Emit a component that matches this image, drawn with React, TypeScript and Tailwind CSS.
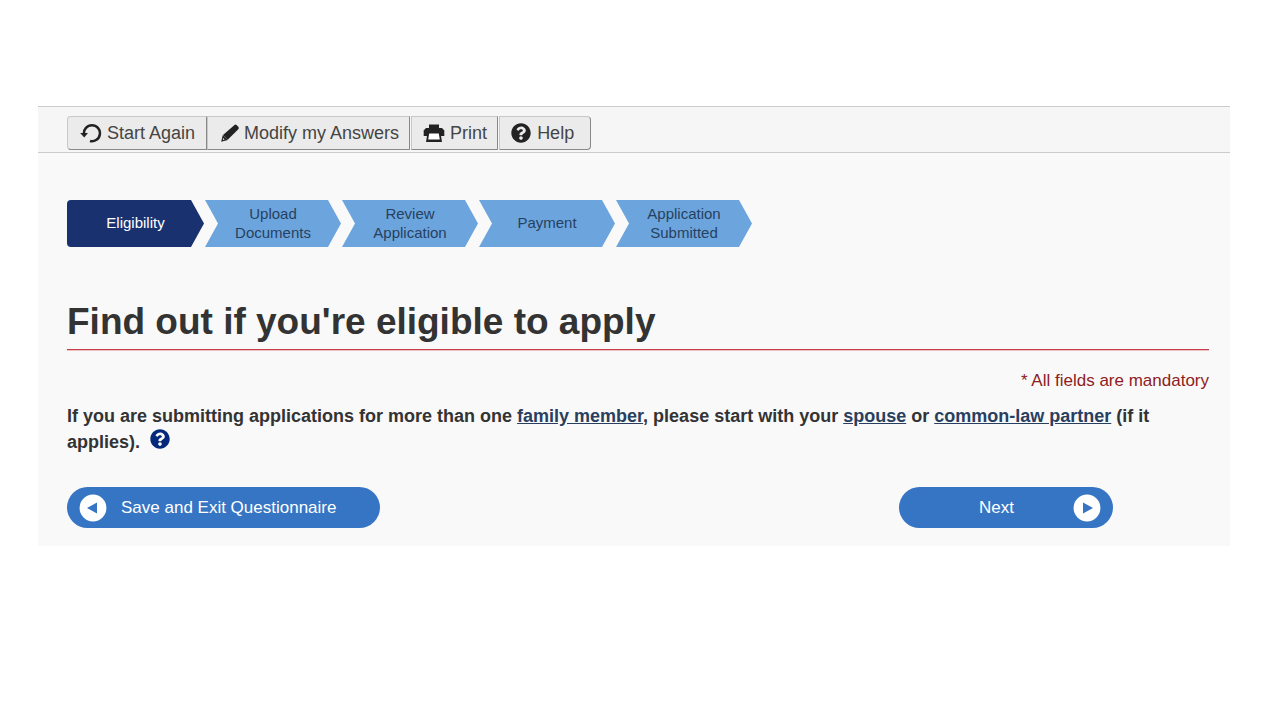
import type { ReactNode } from "react";
import clsx from "clsx";
import { FaQuestionCircle } from "react-icons/fa";

const steps = ["Eligibility", "Upload Documents", "Review Application", "Payment", "Application Submitted"];

function RestartIcon() {
  return (
    <svg className="h-5 w-6 shrink-0" viewBox="0 0 24 20" fill="none" aria-hidden="true">
      <path d="M5 11.200A8 8 0 1 1 11 18" stroke="#222" strokeWidth="2.5" />
      <path d="M1.200 10H9L5.200 14.500Z" fill="#222" />
    </svg>
  );
}

function PencilIcon() {
  return (
    <svg className="size-5 shrink-0" viewBox="0 0 20 20" fill="#222" aria-hidden="true">
      <path d="M14.200 2.200q1.300-1.300 2.600 0l1.500 1.500q1.200 1.200 0 2.500L7.700 16.800l-4.700-4.700z" />
      <path d="M2.800 12l5 5-6.600 1.800z" />
      <path d="M3.200 15l1.500 1.500-1.500.4-.4-.4z" fill="#ebebeb" />
    </svg>
  );
}

function PrinterIcon() {
  return (
    <svg className="h-5 w-6 shrink-0" viewBox="0 0 24 20" fill="#222" aria-hidden="true">
      <path d="M7 1.500h10V5H7z" />
      <path d="M4 5h16l2.300 2.500V13H1.700V7.500z" />
      <path d="M5.500 9.500h13L20 19H4z" />
      <path d="M7.200 10.500h9.600l1 6H6.200z" fill="#fff" />
    </svg>
  );
}

function ArrowBadge({ direction }: { direction: "left" | "right" }) {
  return (
    <svg className="size-7 shrink-0" viewBox="0 0 28 28" aria-hidden="true">
      <circle cx="14" cy="14" r="13.4" fill="#fff" />
      <path d={direction === "left" ? "M8 14l10-5.500v11z" : "M20 14l-10-5.500v11z"} fill="#3575c3" />
    </svg>
  );
}

function ToolbarButton({ icon, className, children }: { icon: ReactNode; className?: string; children: ReactNode }) {
  return (
    <button
      type="button"
      className={clsx(
        "flex h-[34px] items-center border border-t-[#c8c8c8] border-r-[#888] border-b-[#888] border-l-[#c8c8c8] bg-[#ebebeb] text-lg leading-6 text-[#444]",
        className,
      )}
    >
      {icon}
      {children}
    </button>
  );
}

function Steps() {
  return (
    <ol className="flex gap-px text-center text-[15px] leading-[19px]">
      {steps.map((step, i) => (
        <li
          key={step}
          aria-current={i === 0 ? "step" : undefined}
          className={clsx(
            "flex h-[47px] items-center justify-center px-6 pb-0.5",
            i === 0
              ? "w-[137px] rounded-l-sm bg-[#19326f] text-white [clip-path:polygon(0_0,calc(100%-13px)_0,100%_50%,calc(100%-13px)_100%,0_100%)]"
              : "w-34 bg-[#6ca5de] text-[#26415f] [clip-path:polygon(0_0,calc(100%-13px)_0,100%_50%,calc(100%-13px)_100%,0_100%,13px_50%)]",
          )}
        >
          {step}
        </li>
      ))}
    </ol>
  );
}

function TermLink({ children }: { children: ReactNode }) {
  return (
    <a href="#glossary" className="text-[#293f5f] underline">
      {children}
    </a>
  );
}

export default function App() {
  return (
    <div className="min-h-screen bg-white pt-[106px] pr-[50px] pl-[38px] font-['Liberation_Sans',Arial,sans-serif] text-[#333]">
      <div className="bg-[#f9f9f9]">
        <div className="flex border-y border-[#ccc] bg-[#f6f6f6] pt-[9px] pb-0.5 pl-[29px]">
          <ToolbarButton className="gap-1 rounded-l-sm px-[11px]" icon={<RestartIcon />}>
            Start Again
          </ToolbarButton>
          <ToolbarButton className="gap-1 pr-2.5 pl-3" icon={<PencilIcon />}>
            Modify my Answers
          </ToolbarButton>
          <ToolbarButton className="ml-px gap-1 px-2.5" icon={<PrinterIcon />}>
            Print
          </ToolbarButton>
          <ToolbarButton
            className="ml-px gap-1.5 rounded-r-sm pr-4 pl-[11px]"
            icon={<FaQuestionCircle className="size-5 text-[#222]" aria-hidden="true" />}
          >
            Help
          </ToolbarButton>
        </div>

        <main className="pt-[47px] pr-[21px] pb-[18px] pl-[29px]">
          <Steps />

          <h1 className="mt-[52px] border-b border-[#c5404a] pb-1 text-[37px] leading-[46px] font-bold shadow-[0_1px_0_#ecc0c3]">
            Find out if you're eligible to apply
          </h1>

          <p className="mt-[19px] text-right text-[17px] leading-6 text-[#8e1c22]">* All fields are mandatory</p>

          <p className="mt-2.5 pr-14 text-lg leading-[26px] font-bold">
            If you are submitting applications for more than one <TermLink>family member</TermLink>, please start with
            your <TermLink>spouse</TermLink> or <TermLink>common-law partner</TermLink> (if it applies).
            <button type="button" aria-label="Help" className="ml-2.5 align-[-1px]">
              <FaQuestionCircle className="size-5 text-[#04297a]" />
            </button>
          </p>

          <div className="mt-8 flex justify-between pr-24">
            <button
              type="button"
              className="flex h-[41px] items-center gap-3.5 rounded-full bg-[#3575c3] pr-11 pl-3 text-[17px] text-white"
            >
              <ArrowBadge direction="left" />
              Save and Exit Questionnaire
            </button>
            <button
              type="button"
              className="flex h-[41px] items-center rounded-full bg-[#3575c3] pr-3 pl-20 text-[17px] text-white"
            >
              Next
              <span className="ml-[59px]">
                <ArrowBadge direction="right" />
              </span>
            </button>
          </div>
        </main>
      </div>
    </div>
  );
}
